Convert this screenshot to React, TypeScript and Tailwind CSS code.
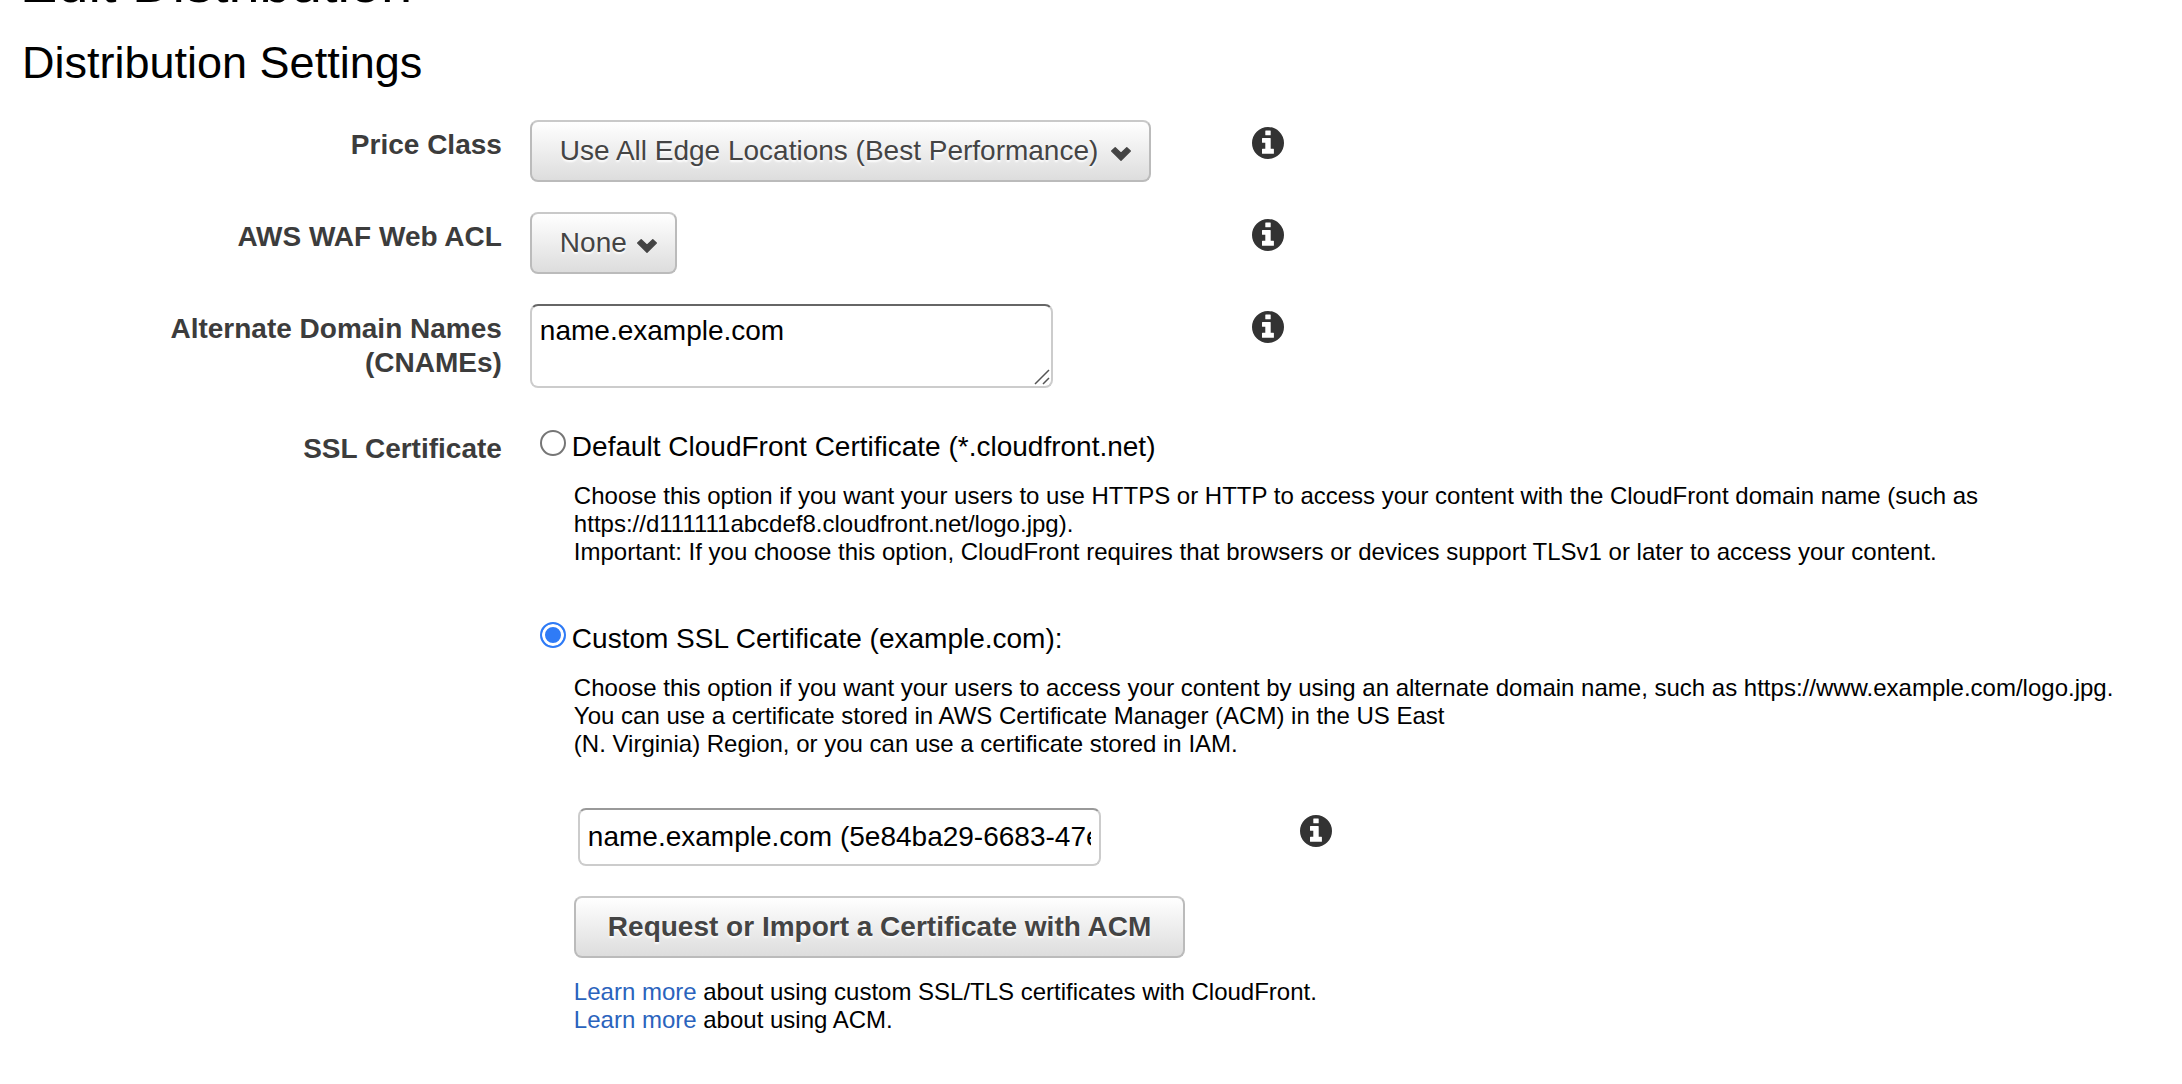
import { useState, type ReactNode } from "react";

function InfoButton({ topic }: { topic: string }) {
  return (
    <button type="button" aria-label={`About ${topic}`} className="block size-8 text-[#333333]">
      <svg viewBox="0 0 32 32" className="size-8" fill="currentColor" aria-hidden="true">
        <path
          fillRule="evenodd"
          d="M16 0a16 16 0 1 0 0 32 16 16 0 0 0 0-32ZM13.8 3.4h4.4q.5 0 .5.5v3.9q0 .5-.5.5h-4.4q-.5 0-.5-.5V3.900q0-.5.5-.5ZM10.500 11h7.700q.5 0 .5.5v10.300h2.700q.5 0 .5.5v4q0 .5-.5.5H10.500q-.5 0-.5-.5v-4q0-.5.5-.5h2.800V15.800h-2.800q-.5 0-.5-.5v-3.800q0-.5.5-.5Z"
        />
      </svg>
    </button>
  );
}

function SelectButton({ id, options }: { id: string; options: string[] }) {
  return (
    <div className="relative inline-block">
      <select
        id={id}
        className="h-[62px] appearance-none rounded-lg border-2 border-[#bbbbbb] border-t-[#c9c9c9] bg-linear-to-b from-white to-[#dddddd] pr-12 pl-7 text-[28px] text-[#444444] [text-shadow:0_2px_2px_#fff]"
      >
        {options.map((o) => (
          <option key={o}>{o}</option>
        ))}
      </select>
      <svg
        viewBox="0 0 22 16"
        className="pointer-events-none absolute top-[26px] right-[19px] h-4 w-[22px]"
        fill="#444444"
        aria-hidden="true"
      >
        <path
          d="M11 14.200 1.700 5 5.200 1.700 11 7.300l5.800-5.600L20.300 5Z"
          stroke="#444444"
          strokeWidth="1.400"
          strokeLinejoin="round"
        />
      </svg>
    </div>
  );
}

function Row({ label, htmlFor, children }: { label: string; htmlFor?: string; children: ReactNode }) {
  const style = "w-[23%] shrink-0 pt-2 pl-40 text-right text-[28px] leading-[34px] font-bold text-[#3c3c3c]";
  return (
    <div className="flex gap-7">
      {htmlFor ? (
        <label htmlFor={htmlFor} className={style}>
          {label}
        </label>
      ) : (
        <div id="ssl-label" className={style}>
          {label}
        </div>
      )}
      {children}
    </div>
  );
}

const radio =
  "size-[26px] shrink-0 appearance-none rounded-full border-2 border-[#767676] bg-white checked:border-[#2f7bf6] checked:bg-[#2f7bf6] checked:shadow-[inset_0_0_0_3px_#fff]";
const field = "w-[523px] rounded-lg border-2 border-[#cccccc] bg-white px-2 text-[28px] text-black";

export default function App() {
  const [cert, setCert] = useState("custom");
  return (
    <main className="overflow-hidden bg-white pb-8 font-['Liberation_Sans',Arial,sans-serif] text-black">
      <h1 className="-mt-[49px] pl-5 text-[56px] leading-[64px]">Edit Distribution</h1>
      <h2 className="mt-6 pl-[22px] text-[45px] leading-[48px]">Distribution Settings</h2>
      <form className="mt-[33px]">
        <div className="flex flex-col gap-[30px]">
          <Row label="Price Class" htmlFor="price">
            <div className="w-[722px]">
              <SelectButton id="price" options={["Use All Edge Locations (Best Performance)"]} />
            </div>
            <div className="-ml-7 pt-[7px]">
              <InfoButton topic="Price Class" />
            </div>
          </Row>
          <Row label="AWS WAF Web ACL" htmlFor="acl">
            <div className="w-[722px]">
              <SelectButton id="acl" options={["None"]} />
            </div>
            <div className="-ml-7 pt-[7px]">
              <InfoButton topic="AWS WAF Web ACL" />
            </div>
          </Row>
          <Row label="Alternate Domain Names (CNAMEs)" htmlFor="cnames">
            <div className="w-[722px]">
              <div className="relative w-fit">
                <textarea
                  id="cnames"
                  defaultValue="name.example.com"
                  className={`${field} block h-[84px] resize border-t-[#666666] pt-2 leading-[34px] [&::-webkit-resizer]:bg-transparent`}
                />
                <svg
                  viewBox="0 0 16 16"
                  className="pointer-events-none absolute right-[3px] bottom-[3px] size-4"
                  stroke="#555555"
                  strokeWidth="1.500"
                  aria-hidden="true"
                >
                  <path d="M1 15 15 1M9 15l6-6" />
                </svg>
              </div>
            </div>
            <div className="-ml-7 pt-[7px]">
              <InfoButton topic="Alternate Domain Names" />
            </div>
          </Row>
        </div>
        <div className="mt-9">
          <Row label="SSL Certificate">
            <div role="radiogroup" aria-labelledby="ssl-label" className="min-w-0 flex-1 pt-1.5 pl-[10px]">
              <label className="flex h-9 items-start gap-[6px] text-[28px] leading-[34px]">
                <input
                  type="radio"
                  name="cert"
                  checked={cert === "default"}
                  onChange={() => setCert("default")}
                  className={radio}
                />
                Default CloudFront Certificate (*.cloudfront.net)
              </label>
              <div className="pl-[34px]">
                <p className="mt-4 text-2xl leading-7">
                  Choose this option if you want your users to use HTTPS or HTTP to access your content with the
                  CloudFront domain name (such as
                  <br />
                  https://d111111abcdef8.cloudfront.net/logo.jpg).
                  <br />
                  Important: If you choose this option, CloudFront requires that browsers or devices support TLSv1 or
                  later to access your content.
                </p>
              </div>
              <label className="mt-14 flex h-9 items-start gap-[6px] text-[28px] leading-[34px]">
                <input
                  type="radio"
                  name="cert"
                  checked={cert === "custom"}
                  onChange={() => setCert("custom")}
                  className={radio}
                />
                Custom SSL Certificate (example.com):
              </label>
              <div className="pl-[34px]">
                <p className="mt-4 text-2xl leading-7">
                  Choose this option if you want your users to access your content by using an alternate domain name,
                  such as https://www.example.com/logo.jpg.
                  <br />
                  You can use a certificate stored in AWS Certificate Manager (ACM) in the US East
                  <br />
                  (N. Virginia) Region, or you can use a certificate stored in IAM.
                </p>
                <div className="mt-[50px] flex pl-1">
                  <div className="w-[722px]">
                    <input
                      type="text"
                      aria-label="Custom SSL certificate"
                      defaultValue="name.example.com (5e84ba29-6683-47e"
                      className={`${field} block h-[58px] border-t-[#999999]`}
                    />
                  </div>
                  <div className="pt-[7px]">
                    <InfoButton topic="Custom SSL Certificate" />
                  </div>
                </div>
                <button
                  type="button"
                  className="mt-[30px] block h-[62px] rounded-lg border-2 border-[#bbbbbb] border-t-[#c9c9c9] bg-linear-to-b from-white to-[#dddddd] px-8 text-[28px] font-bold whitespace-nowrap text-[#444444] [text-shadow:0_2px_2px_#fff]"
                >
                  Request or Import a Certificate with ACM
                </button>
                <p className="mt-5 text-2xl leading-7">
                  <a href="#ssl" className="text-[#2a63bd]">
                    Learn more
                  </a>{" "}
                  about using custom SSL/TLS certificates with CloudFront.
                  <br />
                  <a href="#acm" className="text-[#2a63bd]">
                    Learn more
                  </a>{" "}
                  about using ACM.
                </p>
              </div>
            </div>
          </Row>
        </div>
      </form>
    </main>
  );
}
